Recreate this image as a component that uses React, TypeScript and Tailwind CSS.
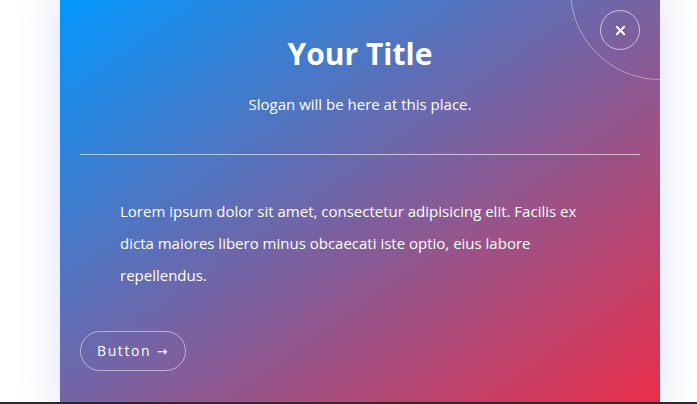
import { X } from "lucide-react";

export default function App() {
  return (
    <div className="w-[697px] h-[404px] bg-white overflow-hidden flex flex-col font-['Open_Sans',sans-serif]">
      <div className="h-[402px] pl-[60px] overflow-hidden">
        <div className="relative w-[600px] h-[420px] mt-[-10px] overflow-hidden bg-linear-to-br/srgb from-[#0099ff] to-[#ec2d48] shadow-[0_0_40px_rgba(90,90,230,0.2)] text-white">
          <div className="absolute right-[-90px] top-[-90px] w-[180px] h-[180px] rounded-full border border-white/40" />
          <button className="absolute right-[20px] top-[20px] w-10 h-10 rounded-full border border-white/60 flex items-center justify-center">
            <X size={15} strokeWidth={3} />
          </button>
          <div className="pt-[44px] px-5">
            <h1 className="text-center text-[30px] leading-[40px] font-bold">Your Title</h1>
            <p className="text-center text-[15px] leading-[20px] mt-[20px]">Slogan will be here at this place.</p>
            <div className="mt-[40px] h-px bg-white/60" />
          </div>
          <p className="px-[60px] mt-[40px] text-[15px] leading-[32px]">
            Lorem ipsum dolor sit amet, consectetur adipisicing elit. Facilis ex dicta maiores libero minus obcaecati iste optio, eius labore repellendus.
          </p>
          <div className="px-5 mt-[40px]">
            <button className="h-10 px-4 rounded-full border border-white/50 text-[14px] font-medium tracking-[1.6px]">
              Button <span className="font-['DejaVu_Sans',sans-serif] text-[13px]">→</span>
            </button>
          </div>
        </div>
      </div>
      <div className="h-[2px] bg-[#2a2a2e]" />
    </div>
  );
}
